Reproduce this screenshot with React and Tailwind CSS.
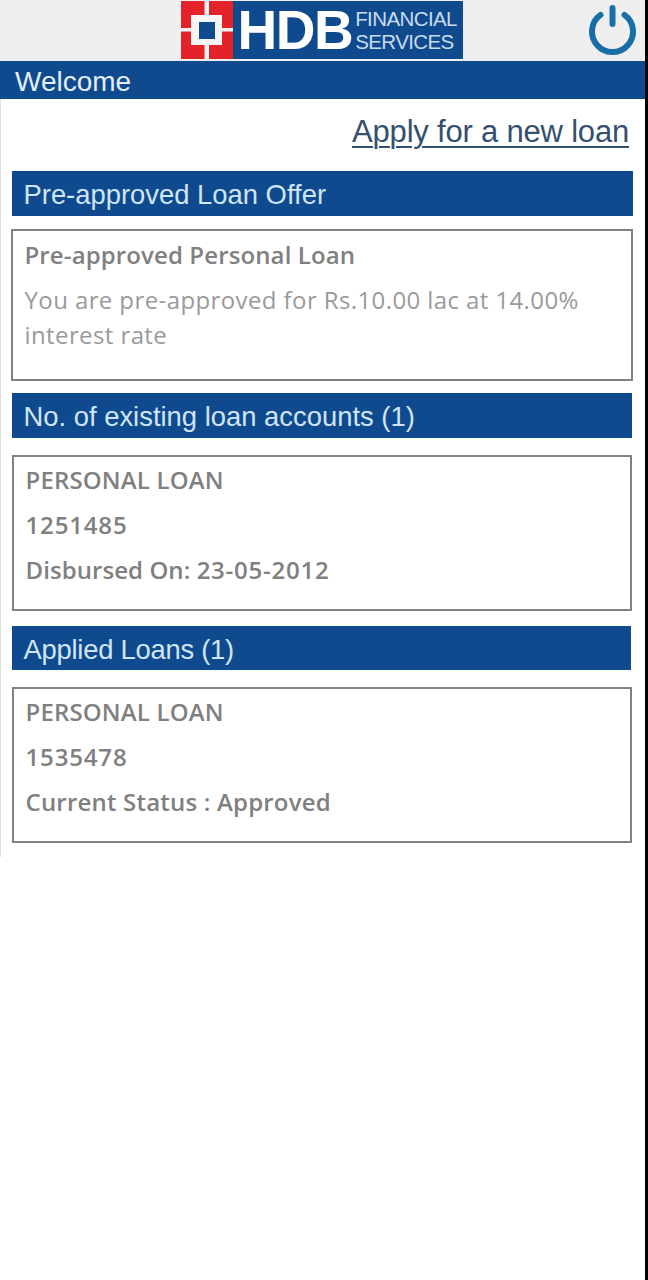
const body = { fontFamily: '"Open Sans", sans-serif' };
const arial = { fontFamily: '"Liberation Sans", sans-serif' };

function Logo() {
  return (
    <div className="flex h-[58px] w-[282px] items-stretch bg-[#0f4a8f]">
      <svg width="52" height="58" viewBox="0 0 52 58" className="shrink-0">
        <rect width="52" height="58" fill="#e4222a" />
        <rect x="0" y="27" width="52" height="3.5" fill="#f3f3f3" />
        <rect x="23.5" y="0" width="4.5" height="16" fill="#f3f3f3" />
        <rect x="23.5" y="42" width="4.5" height="16" fill="#f3f3f3" />
        <rect x="10" y="14" width="31" height="30" fill="#f5f5f5" />
        <rect x="18" y="21" width="16" height="17" fill="#0f4a8f" />
      </svg>
      <div className="ml-[5px] flex items-center text-[55px] font-bold leading-none tracking-[-1.5px] text-white" style={arial}>
        HDB
      </div>
      <div className="ml-[3px] flex flex-col justify-center text-[20.5px] leading-[23px] text-[#c9dced]" style={arial}>
        <span className="tracking-[-0.6px]">FINANCIAL</span>
        <span className="tracking-[-0.6px]">SERVICES</span>
      </div>
    </div>
  );
}

function Bar({ children, className, textClass = "" }) {
  return (
    <div className={`flex items-center bg-[#0f4a8f] pb-[1px] pl-[12px] text-[27.4px] text-[#d0e5f5] ${className}`} style={arial}>
      <span className={`relative top-[2px] ${textClass}`}>{children}</span>
    </div>
  );
}

function Box({ className, children }) {
  return (
    <div className={`border-2 border-[#7c8388] bg-white text-[24px] text-[#808080] ${className}`} style={body}>
      {children}
    </div>
  );
}

const Line = ({ className = "", children }) => (
  <div className={`h-[45px] whitespace-nowrap font-semibold leading-[45px] ${className}`}>{children}</div>
);

export default function App() {
  return (
    <div className="h-[1280px] w-[648px] overflow-hidden border-r-[3px] border-black bg-white">
      <header className="relative flex h-[61px] justify-center bg-[#efefef] pr-[2px] pt-px">
        <Logo />
        <svg className="absolute left-[588px] top-[3px]" width="50" height="52" viewBox="0 0 50 52" fill="none" stroke="#1a6ea8" strokeWidth="6">
          <path d="M12.5 11.9 A20.5 20.5 0 1 0 36.5 11.9" strokeLinecap="round" />
          <path d="M24.5 5 V21" strokeLinecap="round" />
        </svg>
      </header>
      <div className="flex h-[38px] items-center bg-[#0f4a8f] pl-[15px] pt-[3px] text-[28px] text-[#e3eef7]" style={arial}>
        Welcome
      </div>
      <main className="h-[758px] border-l-[1.5px] border-[#e0e0e0]">
        <div className="flex h-[72px] items-start justify-end pr-[16px] pt-[14px]">
          <a className="text-[31px] leading-[38px] tracking-[-0.2px] text-[#33506f] underline decoration-2 underline-offset-4" style={arial}>
            Apply for a new loan
          </a>
        </div>
        <Bar className="ml-[10.5px] mr-[12px] h-[45px]">Pre-approved Loan Offer</Bar>
        <Box className="ml-[9.5px] mr-[12px] mt-[13px] h-[152px] pl-[12px] pt-px">
          <Line className="tracking-[0.12px]">Pre-approved Personal Loan</Line>
          <div className="h-[35px] whitespace-nowrap leading-[45px] tracking-[0.4px] text-[#9a9a9a]">You are pre-approved for Rs.10.00 lac at 14.00%</div>
          <div className="leading-[45px] tracking-[0.4px] text-[#9a9a9a]">interest rate</div>
        </Box>
        <Bar className="ml-[10.5px] mr-[13px] mt-[12px] h-[45px]">No. of existing loan accounts (1)</Bar>
        <Box className="ml-[10.5px] mr-[13px] mt-[17px] h-[156px] pl-[12px]">
          <Line className="tracking-[0.16px]">PERSONAL LOAN</Line>
          <Line className="tracking-[0.85px]">1251485</Line>
          <Line>
            <span className="tracking-[0.07px]">Disbursed On: </span>
            <span className="tracking-[0.77px]">23-05-2012</span>
          </Line>
        </Box>
        <Bar className="ml-[10.5px] mr-[14px] mt-[15px] h-[44px]" textClass="tracking-[-0.25px]">Applied Loans (1)</Bar>
        <Box className="ml-[10.5px] mr-[13px] mt-[17px] h-[156px] pl-[12px]">
          <Line className="tracking-[0.16px]">PERSONAL LOAN</Line>
          <Line className="tracking-[0.85px]">1535478</Line>
          <Line className="tracking-[0.2px]">Current Status : Approved</Line>
        </Box>
      </main>
    </div>
  );
}
